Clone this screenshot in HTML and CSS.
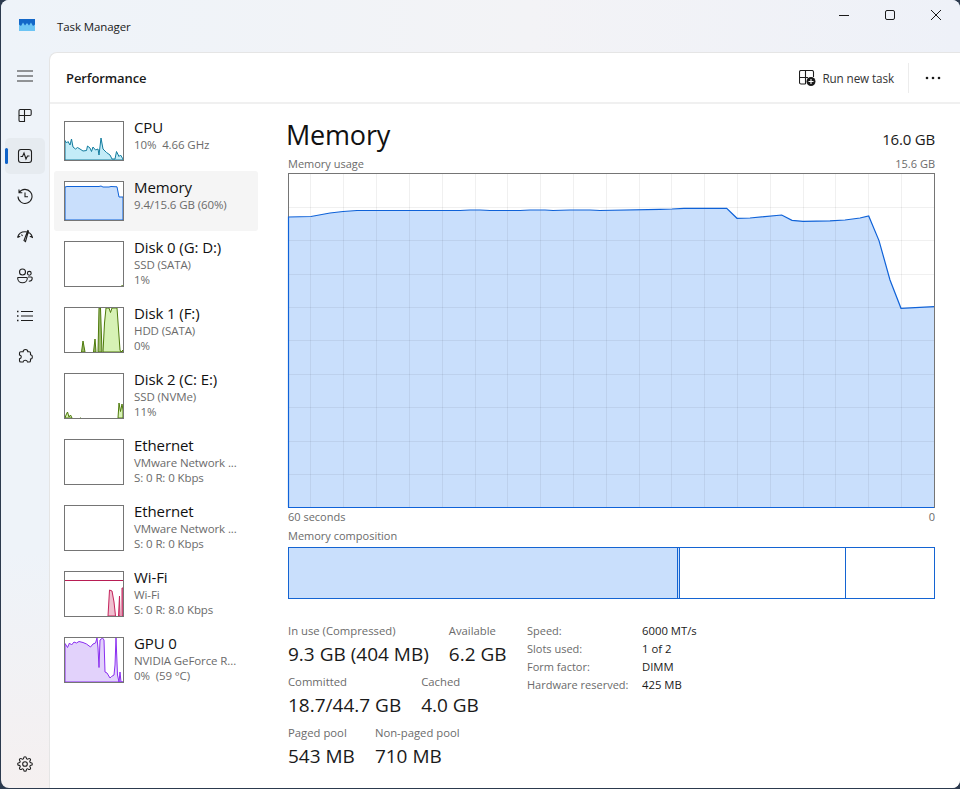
FILE: index.html
```html
<!DOCTYPE html>
<html lang="en">
<head>
    <meta charset="UTF-8">
    <title>Task Manager</title>
    <link rel="stylesheet" href="styles.css">
</head>
<body>
    <div class="window">
        <div class="titlebar">
            <svg class="app_icon" width="16" height="12" viewBox="0 0 16 12">
                <rect width="16" height="12" fill="#6cc4f4"/>
                <path d="M0 0H16V5.500L14 7 12 3.500 10 6.500 8 4 6 6.500 4 3.500 2 7 0 5.500Z" fill="#1367c8"/>
            </svg>
            <span class="app_title">Task Manager</span>
            <div class="window_buttons">
                <svg width="12" height="12" viewBox="0 0 12 12"><path d="M1 6.500H11" stroke="#1a1a1a" fill="none"/></svg>
                <svg width="12" height="12" viewBox="0 0 12 12"><rect x="1.500" y="1.500" width="9" height="9" rx="1.500" stroke="#1a1a1a" fill="none"/></svg>
                <svg width="12" height="12" viewBox="0 0 12 12"><path d="M1 1L11 11M11 1L1 11" stroke="#1a1a1a" fill="none"/></svg>
            </div>
        </div>
        <div class="app_body">
            <div class="rail">
                <div class="rail_button">
                    <svg width="16" height="16" viewBox="0 0 16 16"><path d="M0 3H16M0 8H16M0 13H16" stroke="#333" fill="none"/></svg>
                </div>
                <div class="rail_button">
                    <svg width="16" height="16" viewBox="0 0 16 16" class="rail_icon"><path d="M2 8.500V2.800C2 2.100 2.600 1.500 3.300 1.500H7.500V13.500H3.300C2.600 13.500 2 12.900 2 12.200ZM2 7.500H14M7.500 1.500H13C13.700 1.500 14.200 2.100 14.200 2.800V6.300C14.200 7 13.700 7.500 13 7.500H7.500"/></svg>
                </div>
                <div class="rail_button active">
                    <svg width="16" height="16" viewBox="0 0 16 16" class="rail_icon"><rect x="1.500" y="1.500" width="13" height="13" rx="2.500"/><path d="M3.500 8.500H5.500L7 5 9 11 10.500 8H12.500"/></svg>
                </div>
                <div class="rail_button">
                    <svg width="16" height="16" viewBox="0 0 16 16" class="rail_icon"><path d="M2.200 4.500A7 7 0 1 1 1 8.500M2 1.500V4.800H5.300M8 4.500V8.800H11"/></svg>
                </div>
                <div class="rail_button">
                    <svg width="16" height="16" viewBox="0 0 16 16" class="rail_icon"><path d="M.5 9.500C1.500 6 4.500 3.800 8 3.800S14.500 6 15.500 9.500L12.800 8.300M.5 9.500L3.200 8.300M4.500 6.500L5.500 8M10.800 2.500L7 12.500 8.500 13.500 11.500 3Z"/></svg>
                </div>
                <div class="rail_button">
                    <svg width="16" height="16" viewBox="0 0 16 16" class="rail_icon"><circle cx="5.500" cy="4" r="3"/><circle cx="12.300" cy="5.300" r="1.900"/><path d="M1 9.500H9.500C10 9.500 10.300 9.900 10.300 10.300 10.300 13 8 14.800 5.500 14.800S.7 13 .7 10.300C.7 9.900 .6 9.500 1 9.500ZM11 9H14.200C14.800 9 15.200 9.400 15.200 10 15.200 12 13.700 13.300 11.800 13.300"/></svg>
                </div>
                <div class="rail_button">
                    <svg width="16" height="16" viewBox="0 0 16 16" class="rail_icon"><path d="M4 3.500H16M4 8H16M4 12.500H16"/><path d="M0 3.500H1.500M0 8H1.500M0 12.500H1.500" stroke-width="1.500"/></svg>
                </div>
                <div class="rail_button">
                    <svg width="16" height="16" viewBox="0 0 16 16" class="rail_icon"><path d="M8.500 1.500C9.800 1.500 10.800 2.500 10.800 3.700H12.200C12.900 3.700 13.500 4.300 13.500 5V6.700C14.600 6.800 15.400 7.700 15.400 8.900S14.600 11 13.500 11.100V12.700C13.500 13.400 12.900 14 12.200 14H10.500C10.300 13 9.500 12.200 8.300 12.200S6.300 13 6.100 14H3.800C3.100 14 2.500 13.400 2.500 12.700V10.800C3.500 10.600 4.300 9.800 4.300 8.700S3.500 7.200 2.500 7V5C2.500 4.300 3.100 3.700 3.800 3.700H6.200C6.200 2.500 7.200 1.500 8.500 1.500Z"/></svg>
                </div>
                <div class="rail_button settings">
                    <svg width="16" height="16" viewBox="0 0 24 24" class="rail_icon gear"><circle cx="12" cy="12" r="3.500"/><path d="M19.400 15a1.650 1.650 0 0 0 .33 1.820l.06.06a2 2 0 0 1 0 2.830 2 2 0 0 1-2.830 0l-.06-.06a1.650 1.650 0 0 0-1.820-.33 1.650 1.650 0 0 0-1 1.510V21a2 2 0 0 1-2 2 2 2 0 0 1-2-2v-.09A1.650 1.650 0 0 0 9 19.400a1.650 1.650 0 0 0-1.820.33l-.06.06a2 2 0 0 1-2.830 0 2 2 0 0 1 0-2.830l.06-.06a1.650 1.650 0 0 0 .33-1.820 1.650 1.650 0 0 0-1.510-1H3a2 2 0 0 1-2-2 2 2 0 0 1 2-2h.09A1.650 1.650 0 0 0 4.600 9a1.650 1.650 0 0 0-.33-1.820l-.06-.06a2 2 0 0 1 0-2.830 2 2 0 0 1 2.830 0l.06.06a1.650 1.650 0 0 0 1.820.33H9a1.650 1.650 0 0 0 1-1.510V3a2 2 0 0 1 2-2 2 2 0 0 1 2 2v.09a1.650 1.650 0 0 0 1 1.510 1.650 1.650 0 0 0 1.820-.33l.06-.06a2 2 0 0 1 2.830 0 2 2 0 0 1 0 2.830l-.06.06a1.650 1.650 0 0 0-.33 1.820V9a1.650 1.650 0 0 0 1.510 1H21a2 2 0 0 1 2 2 2 2 0 0 1-2 2h-.09a1.650 1.650 0 0 0-1.510 1z"/></svg>
                </div>
            </div>
            <div class="content">
                <div class="header">
                    <span class="page_title">Performance</span>
                    <div class="toolbar">
                        <svg width="17" height="16" viewBox="0 0 17 16" class="rail_icon"><path d="M6.500 14H2C1.200 14 .5 13.300 .5 12.500V2C.5 1.200 1.200 .5 2 .5H13C13.800 .5 14.500 1.200 14.500 2V7M.5 7.500H9M6.500 .5V14"/><circle cx="12" cy="11.500" r="4.500" fill="#1a1a1a" stroke="none"/><path d="M12 9V14M9.500 11.500H14.500" stroke="#fff"/></svg>
                        <span class="run_task">Run new task</span>
                        <div class="toolbar_divider"></div>
                        <svg width="16" height="4" viewBox="0 0 16 4" class="more_dots"><circle cx="2" cy="2" r="1.300"/><circle cx="8" cy="2" r="1.300"/><circle cx="14" cy="2" r="1.300"/></svg>
                    </div>
                </div>
                <div class="perf_layout">
                    <div class="sidebar">
                        <div class="device">
                            <div class="thumb">
                                <svg viewBox="0 0 58 38" preserveAspectRatio="none">
                                    <path d="M0 18.500L1.500 21 3 19.500 5 23 6.500 17 8 25 10.500 27 12.500 25.500 15 27 18 29 21.500 28.500 22.500 24 25 26 26.500 29.500 28 25 30.500 28 33 27 34 33 36 16 38 27 41.500 30.500 45 33 47 37 50 37 51.500 29.500 54 34.500 55.500 33 58 37V38H0Z" fill="#c3ecf8" stroke="#137c9e"/>
                                </svg>
                            </div>
                            <div class="device_text">
                                <div class="device_name">CPU</div>
                                <div class="device_info">10%&nbsp; 4.66 GHz</div>
                            </div>
                        </div>
                        <div class="device selected">
                            <div class="thumb">
                                <svg viewBox="0 0 58 38" preserveAspectRatio="none">
                                    <path d="M0 38V5L2 4.500H34L36 4 38 5H44L46 4.500 52 4.800 54 15H58V38Z" fill="#c9dffc" stroke="#0f62d8"/>
                                </svg>
                            </div>
                            <div class="device_text">
                                <div class="device_name">Memory</div>
                                <div class="device_info">9.4/15.6 GB (60%)</div>
                            </div>
                        </div>
                        <div class="device tall">
                            <div class="thumb">
                                <svg viewBox="0 0 58 44" preserveAspectRatio="none">
                                    <path d="M56 44H58V43" fill="none" stroke="#4e7a0b"/>
                                </svg>
                            </div>
                            <div class="device_text">
                                <div class="device_name">Disk 0 (G: D:)</div>
                                <div class="device_info">SSD (SATA)</div>
                                <div class="device_info">1%</div>
                            </div>
                        </div>
                        <div class="device tall">
                            <div class="thumb">
                                <svg viewBox="0 0 58 44" preserveAspectRatio="none">
                                    <path d="M16.500 44L18 33 20 44ZM28.500 44L30 31 31 44ZM33 44L34 0 35.500 0 37 44Z" fill="#9dbb6f" stroke="#4e7a0b"/>
                                    <path d="M38 44L39.500 15 41 0H44L45.500 4.500 47 0H52L55 42 56 44 58 42V44Z" fill="#d7f2b5" stroke="#4e7a0b"/>
                                </svg>
                            </div>
                            <div class="device_text">
                                <div class="device_name">Disk 1 (F:)</div>
                                <div class="device_info">HDD (SATA)</div>
                                <div class="device_info">0%</div>
                            </div>
                        </div>
                        <div class="device tall">
                            <div class="thumb">
                                <svg viewBox="0 0 58 44" preserveAspectRatio="none">
                                    <path d="M0 44L1 41 2.500 38 4 43 5.500 41 7 44ZM15 44H16M53 44L54 29 55.500 37.500 57 30 58 36V44Z" fill="#d7f2b5" stroke="#4e7a0b"/>
                                </svg>
                            </div>
                            <div class="device_text">
                                <div class="device_name">Disk 2 (C: E:)</div>
                                <div class="device_info">SSD (NVMe)</div>
                                <div class="device_info">11%</div>
                            </div>
                        </div>
                        <div class="device tall">
                            <div class="thumb"></div>
                            <div class="device_text">
                                <div class="device_name">Ethernet</div>
                                <div class="device_info">VMware Network ...</div>
                                <div class="device_info">S: 0 R: 0 Kbps</div>
                            </div>
                        </div>
                        <div class="device tall">
                            <div class="thumb"></div>
                            <div class="device_text">
                                <div class="device_name">Ethernet</div>
                                <div class="device_info">VMware Network ...</div>
                                <div class="device_info">S: 0 R: 0 Kbps</div>
                            </div>
                        </div>
                        <div class="device tall">
                            <div class="thumb">
                                <svg viewBox="0 0 58 44" preserveAspectRatio="none">
                                    <path d="M0 8.500H58" fill="none" stroke="#b81d54"/>
                                    <path d="M43 44L44.500 18 47 19 49 30 50.500 44ZM53.500 44L54.500 24 55 44ZM57 44V16L58 16V44Z" fill="#f0bfd0" stroke="#c4245c"/>
                                </svg>
                            </div>
                            <div class="device_text">
                                <div class="device_name">Wi-Fi</div>
                                <div class="device_info">Wi-Fi</div>
                                <div class="device_info">S: 0 R: 8.0 Kbps</div>
                            </div>
                        </div>
                        <div class="device tall">
                            <div class="thumb">
                                <svg viewBox="0 0 58 44" preserveAspectRatio="none">
                                    <path d="M0 5.500L1 7 2.500 9.500 4.500 5 6.500 7 9 4 11.500 5 14 3.500 18 4.500 21.500 6 25.500 9 28 6 30.500 5 32 0 33 10 34 29.500 35 2 37.500 0 39 2 40 34 42 35 45 40 46.500 38.500 49 37 50 27 51 0 52.500 37 54 44 55 34 56 44H58V44H0Z" fill="#e2d2fb" stroke="#8a2ef0"/>
                                </svg>
                            </div>
                            <div class="device_text">
                                <div class="device_name">GPU 0</div>
                                <div class="device_info">NVIDIA GeForce R...</div>
                                <div class="device_info">0%&nbsp; (59 °C)</div>
                            </div>
                        </div>
                    </div>
                    <div class="main">
                        <div class="title_row">
                            <h1>Memory</h1>
                            <span class="total_size">16.0 GB</span>
                        </div>
                        <div class="label_row usage_label">
                            <span>Memory usage</span>
                            <span>15.6 GB</span>
                        </div>
                        <div class="graph">
                            <svg width="645" height="333" viewBox="0 0 645 333">
                                <path d="M0 333V43L22 42.500 41 39 54 37.500 68 36.500H171L181 36H191L201 36.500H231L241 36H256L264 36.500 281 36H301L311 36.500 371 35.300 383 35 395 34.300H437.700L448 44.300 461 44 492.700 41 503 46.300 514 47.300 541 46.800 556 46 571 44 579.700 42 590 66.600 601 106 612 134.300 645 132.700V333Z" fill="#c9dffc"/>
                                <path class="grid_lines" d="M21.500 0V333M54.500 0V333M87.500 0V333M120.500 0V333M153.500 0V333M186.500 0V333M218.500 0V333M251.500 0V333M284.500 0V333M317.500 0V333M350.500 0V333M382.500 0V333M415.500 0V333M448.500 0V333M481.500 0V333M514.500 0V333M546.500 0V333M579.500 0V333M612.500 0V333M0 33.500H645M0 66.500H645M0 100.500H645M0 133.500H645M0 166.500H645M0 200.500H645M0 233.500H645M0 267.500H645M0 300.500H645"/>
                                <path class="usage_line" d="M-.5 333.500V43L22 42.500 41 39 54 37.500 68 36.500H171L181 36H191L201 36.500H231L241 36H256L264 36.500 281 36H301L311 36.500 371 35.300 383 35 395 34.300H437.700L448 44.300 461 44 492.700 41 503 46.300 514 47.300 541 46.800 556 46 571 44 579.700 42 590 66.600 601 106 612 134.300 645 132.700M-1 333.500H645"/>
                            </svg>
                        </div>
                        <div class="label_row">
                            <span>60 seconds</span>
                            <span>0</span>
                        </div>
                        <div class="label_row composition_label">
                            <span>Memory composition</span>
                        </div>
                        <div class="composition">
                            <div class="seg_used"></div>
                            <div class="seg_modified"></div>
                            <div class="seg_standby"></div>
                            <div class="seg_free"></div>
                        </div>
                        <div class="stats">
                            <div class="stats_left">
                                <div class="stat_row">
                                    <div class="stat">
                                        <div class="stat_label">In use (Compressed)</div>
                                        <div class="stat_value">9.3 GB (404 MB)</div>
                                    </div>
                                    <div class="stat">
                                        <div class="stat_label">Available</div>
                                        <div class="stat_value">6.2 GB</div>
                                    </div>
                                </div>
                                <div class="stat_row">
                                    <div class="stat">
                                        <div class="stat_label">Committed</div>
                                        <div class="stat_value">18.7/44.7 GB</div>
                                    </div>
                                    <div class="stat">
                                        <div class="stat_label">Cached</div>
                                        <div class="stat_value">4.0 GB</div>
                                    </div>
                                </div>
                                <div class="stat_row">
                                    <div class="stat">
                                        <div class="stat_label">Paged pool</div>
                                        <div class="stat_value">543 MB</div>
                                    </div>
                                    <div class="stat">
                                        <div class="stat_label">Non-paged pool</div>
                                        <div class="stat_value">710 MB</div>
                                    </div>
                                </div>
                            </div>
                            <div class="specs">
                                <span class="spec_key">Speed:</span><span class="spec_val">6000 MT/s</span>
                                <span class="spec_key">Slots used:</span><span class="spec_val">1 of 2</span>
                                <span class="spec_key">Form factor:</span><span class="spec_val">DIMM</span>
                                <span class="spec_key">Hardware reserved:</span><span class="spec_val">425 MB</span>
                            </div>
                        </div>
                    </div>
                </div>
            </div>
        </div>
    </div>
</body>
</html>
```

FILE: styles.css
```css
* {
    box-sizing: border-box;
}

html, body {
    height: 100%;
}

body {
    margin: 0;
    overflow: hidden;
    background-color: #2c3a4e;
    font-family: "Open Sans", "Noto Sans", sans-serif;
    color: #1a1a1a;
}

.window {
    display: flex;
    flex-direction: column;
    width: 959px;
    height: 788px;
    margin-left: 1px;
    border-radius: 8px;
    overflow: hidden;
    background: linear-gradient(180deg, #eef3f9 0%, #eef3f9 70%, #f5f0f0 100%);
}

/* title bar */
.titlebar {
    display: flex;
    align-items: center;
    height: 52px;
    flex-shrink: 0;
    padding-left: 18px;
    background: linear-gradient(90deg, #eef3f9 0%, #f3f3f6 55%, #eef1f8 100%);
}

.app_icon {
    margin-top: -3px;
}

.app_title {
    margin-top: 1px;
    margin-left: 22px;
    font-size: 11.5px;
    letter-spacing: -0.1px;
}

.window_buttons {
    display: flex;
    align-self: flex-start;
    gap: 34px;
    margin-left: auto;
    margin-right: 18px;
    padding-top: 9px;
}

/* left rail */
.app_body {
    display: flex;
    flex: 1;
    min-height: 0;
}

.rail {
    display: flex;
    flex-direction: column;
    gap: 4px;
    width: 48px;
    flex-shrink: 0;
    padding: 6px 0 6px 4px;
}

.rail_button {
    position: relative;
    display: flex;
    align-items: center;
    justify-content: center;
    width: 40px;
    height: 36px;
    border-radius: 5px;
}

.rail_button.active {
    background-color: #e6ebf0;
}

.rail_button.active::before {
    content: "";
    position: absolute;
    left: 0;
    top: 10px;
    width: 3px;
    height: 16px;
    border-radius: 2px;
    background-color: #0f62c8;
}

.rail_button.settings {
    margin-top: auto;
}

.rail_icon {
    fill: none;
    stroke: #1f1f1f;
    stroke-width: 1.1;
}

.rail_icon.gear {
    stroke-width: 1.600;
}

/* white panel */
.content {
    display: flex;
    flex-direction: column;
    flex: 1;
    min-width: 0;
    background-color: #fff;
    border-top: 1px solid #e5e5e5;
    border-left: 1px solid #e5e5e5;
    border-top-left-radius: 8px;
}

.header {
    display: flex;
    align-items: center;
    justify-content: space-between;
    height: 51px;
    flex-shrink: 0;
    padding: 0 19px 0 16px;
    border-bottom: 2px solid #f0f0f0;
}

.page_title {
    font-size: 13px;
    font-weight: 600;
    letter-spacing: -0.1px;
}

.toolbar {
    display: flex;
    align-items: center;
    color: #333;
}

.run_task {
    margin-left: 6px;
    font-size: 11.700px;
    letter-spacing: -0.1px;
}

.toolbar_divider {
    width: 1px;
    height: 30px;
    margin: 0 16px 0 14px;
    background-color: #ececec;
}

.more_dots {
    fill: #1a1a1a;
}

/* device list */
.perf_layout {
    display: flex;
    flex: 1;
    min-height: 0;
}

.sidebar {
    width: 208px;
    flex-shrink: 0;
    padding: 7px 0 0 4px;
}

.device {
    display: flex;
    gap: 10px;
    padding: 10px 0 10px 10px;
    border-radius: 3px;
}

.device.selected {
    background-color: #f5f5f5;
}

.thumb {
    width: 60px;
    height: 40px;
    flex-shrink: 0;
    background-color: #fff;
    border: 1px solid #757575;
}

.device.tall .thumb {
    height: 46px;
}

.thumb svg {
    display: block;
    width: 100%;
    height: 100%;
}

.device_text {
    margin-top: -3px;
    white-space: nowrap;
}

.device_name {
    margin-bottom: 1px;
    font-size: 15px;
    line-height: 18px;
    letter-spacing: -0.1px;
    color: #111;
}

.device_info {
    font-size: 11.500px;
    line-height: 15px;
    letter-spacing: -0.1px;
    color: #6b6b6b;
}

/* memory panel */
.main {
    flex: 1;
    min-width: 0;
    padding: 12px 25px 0 30px;
}

.title_row {
    display: flex;
    align-items: baseline;
    justify-content: space-between;
    height: 38px;
}

h1 {
    margin: 0 0 0 -2px;
    font-size: 27px;
    font-weight: 400;
    line-height: 38px;
    letter-spacing: -0.2px;
    color: #111;
}

.total_size {
    font-size: 15px;
    letter-spacing: -0.2px;
}

.label_row {
    display: flex;
    justify-content: space-between;
    height: 16px;
    font-size: 11px;
    line-height: 16px;
    color: #6b6b6b;
}

.usage_label {
    margin: 2px 0 1px;
}

.composition_label {
    margin: 3px 0;
}

.graph {
    width: 647px;
    height: 335px;
    margin-bottom: 1px;
    border: 1px solid #757575;
}

.graph svg {
    display: block;
    overflow: visible;
}

.grid_lines {
    fill: none;
    stroke: rgba(0, 0, 0, 0.06);
}

.usage_line {
    fill: none;
    stroke: #0f62d8;
    stroke-width: 1.200;
}

.composition {
    display: flex;
    width: 647px;
    height: 52px;
    border: 1px solid #1464d2;
}

.seg_used {
    width: 389px;
    background-color: #c9dffc;
    border-right: 1px solid #1464d2;
}

.seg_modified {
    width: 2px;
    background-color: #c9dffc;
    border-right: 1px solid #1464d2;
}

.seg_standby {
    width: 166px;
    border-right: 1px solid #1464d2;
}

.seg_free {
    flex: 1;
}

/* numbers under the bar */
.stats {
    display: flex;
    margin-top: 24px;
}

.stats_left {
    display: flex;
    flex-direction: column;
    gap: 5px;
    width: 239px;
    flex-shrink: 0;
}

.stat_row {
    display: flex;
    gap: 20px;
    height: 46px;
}

.stat {
    white-space: nowrap;
}

.stat_label {
    font-size: 11.300px;
    line-height: 16px;
    color: #6b6b6b;
}

.stat_value {
    font-size: 19px;
    line-height: 30px;
    color: #1a1a1a;
}

.specs {
    display: grid;
    grid-template-columns: 115px auto;
    grid-auto-rows: 18px;
    align-content: start;
    margin-top: -1px;
    font-size: 11px;
    line-height: 18px;
    white-space: nowrap;
}

.spec_key {
    color: #6b6b6b;
}

.spec_val {
    font-size: 11.300px;
    color: #1a1a1a;
}
```
